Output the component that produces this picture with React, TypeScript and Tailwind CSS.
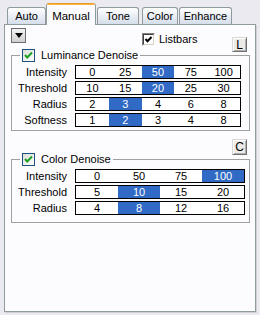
import React from 'react';

// Windows XP style denoise settings panel

type RowProps = { label: string; values: string[]; sel: number; boxW: string };

const Row: React.FC<RowProps> = ({ label, values, sel, boxW }) => (
  <div className="flex h-[14px] items-center">
    <div className="w-[55px] text-right leading-[14px]">{label}</div>
    <div className={`ml-[8px] flex h-[14px] border border-black bg-white ${boxW}`}>
      {values.map((v, i) => (
        <div
          key={v + i}
          className={`flex-1 text-center leading-[12px] ${i === sel ? 'bg-[#316ac5] text-white' : 'text-black'}`}
        >
          {v}
        </div>
      ))}
    </div>
  </div>
);

const XpCheck: React.FC = () => (
  <div className="flex h-[13px] w-[13px] items-center justify-center border border-[#1c5180] bg-gradient-to-br from-[#dcdcd7] to-white">
    <svg width="11" height="11" viewBox="0 0 11 11">
      <polyline points="2,5 4.2,7.5 9,2.5" fill="none" stroke="#21a121" strokeWidth="2" />
    </svg>
  </div>
);

const ClassicCheck: React.FC = () => (
  <div className="h-[13px] w-[13px] border-t border-l border-b border-r border-t-[#808080] border-l-[#808080] border-b-white border-r-white">
    <div className="flex h-full w-full items-center justify-center border-t border-l border-b border-r border-t-[#404040] border-l-[#404040] border-b-[#d4d0c8] border-r-[#d4d0c8] bg-white">
      <svg width="9" height="9" viewBox="0 0 9 9">
        <polyline points="1.5,4 3.5,6.2 7.5,2" fill="none" stroke="#000" strokeWidth="2" />
      </svg>
    </div>
  </div>
);

const SmallButton: React.FC<{ children: React.ReactNode; cls: string }> = ({ children, cls }) => (
  <div
    className={`flex items-center justify-center border border-t-[#d8d8d8] border-l-[#d8d8d8] border-b-[#707070] border-r-[#707070] bg-[#ecebe8] text-[12px] leading-none shadow-[inset_1px_1px_0_#fff,inset_-1px_-1px_0_#b0b0b0] ${cls}`}
  >
    {children}
  </div>
);

const Tab: React.FC<{ label: string; cls: string }> = ({ label, cls }) => (
  <div
    className={`flex h-[17px] items-center justify-center rounded-t-[3px] border-x border-t border-[#919b9c] bg-gradient-to-b from-white to-[#d5deea] ${cls}`}
  >
    {label}
  </div>
);

export default function App() {
  return (
    <div className="h-[315px] w-[260px] bg-[#ebeaf0] font-['Liberation_Sans',Arial,sans-serif] text-[11px] text-black">
      {/* tabs */}
      <div className="flex h-[24px] items-end pl-[7px]">
        <Tab label="Auto" cls="w-[39px]" />
        <div className="relative z-10 -mb-px flex h-[22px] w-[50px] flex-col rounded-t-[3px] border-x border-[#919b9c] bg-[#fcfcfe]">
          <div className="h-[3px] rounded-t-[2px] bg-gradient-to-b from-[#e68b2c] to-[#ffc73c]" />
          <div className="flex flex-1 items-start justify-center pt-[3px] text-[11.5px]">Manual</div>
        </div>
        <Tab label="Tone" cls="ml-[1px] w-[42px]" />
        <Tab label="Color" cls="ml-[3px] w-[36px]" />
        <Tab label="Enhance" cls="ml-[1px] w-[53px]" />
      </div>

      {/* panel */}
      <div className="ml-[4px] h-[288px] w-[252px] border border-[#919b9c] bg-[#fcfcfe] shadow-[1px_1px_0_#d0d0d8]">
        <div className="flex h-[24px] items-start">
          <div className="ml-[6px] mt-[3px] flex h-[15px] w-[15px] items-center justify-center border border-[#6e6e6e] bg-gradient-to-b from-[#f4f4f4] to-[#cfcfcf]">
            <svg width="8" height="5" viewBox="0 0 8 5">
              <polygon points="0,0 8,0 4,5" fill="#000" />
            </svg>
          </div>
          <div className="ml-[116px] mt-[8px] flex items-center gap-[4px]">
            <ClassicCheck />
            <span className="leading-[13px]">Listbars</span>
          </div>
          <SmallButton cls="ml-auto mr-[8px] mt-[12px] h-[15px] w-[15px]">L</SmallButton>
        </div>

        <fieldset className="ml-[6px] w-[239px] border border-[#a0a0a0] px-0 pb-[3px] pt-[3px]">
          <legend className="ml-[8px] px-[2px]">
            <div className="flex items-center gap-[6px]">
              <XpCheck />
              <span className="leading-[13px]">Luminance Denoise</span>
            </div>
          </legend>
          <div className="flex flex-col gap-[2px]">
            <Row label="Intensity" values={['0', '25', '50', '75', '100']} sel={2} boxW="w-[166px]" />
            <Row label="Threshold" values={['10', '15', '20', '25', '30']} sel={2} boxW="w-[166px]" />
            <Row label="Radius" values={['2', '3', '4', '6', '8']} sel={1} boxW="w-[166px]" />
            <Row label="Softness" values={['1', '2', '3', '4', '8']} sel={1} boxW="w-[166px]" />
          </div>
        </fieldset>

        <div className="mt-[8px] flex h-[14px] items-start">
          <SmallButton cls="ml-auto mr-[8px] h-[16px] w-[15px]">C</SmallButton>
        </div>

        <fieldset className="ml-[6px] w-[239px] border border-[#a0a0a0] px-0 pb-[7px] pt-[3px]">
          <legend className="ml-[8px] px-[2px]">
            <div className="flex items-center gap-[6px]">
              <XpCheck />
              <span className="leading-[13px]">Color Denoise</span>
            </div>
          </legend>
          <div className="flex flex-col gap-[2px]">
            <Row label="Intensity" values={['0', '50', '75', '100']} sel={3} boxW="w-[170px]" />
            <Row label="Threshold" values={['5', '10', '15', '20']} sel={1} boxW="w-[170px]" />
            <Row label="Radius" values={['4', '8', '12', '16']} sel={1} boxW="w-[170px]" />
          </div>
        </fieldset>
      </div>
    </div>
  );
}
